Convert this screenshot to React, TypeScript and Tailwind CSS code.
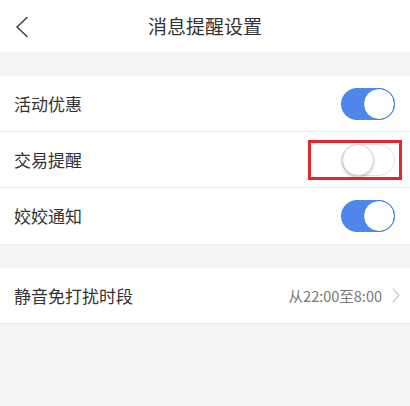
const font = "font-['Noto_Sans_CJK_SC','Noto_Sans',sans-serif]";

function Toggle({ on }: { on: boolean }) {
  return (
    <div
      className={
        on
          ? 'relative h-[32px] w-[54px] rounded-full bg-[#4f86ec]'
          : 'relative h-[32px] w-[54px] rounded-full border border-[#e3e3e3] bg-white'
      }
    >
      <div
        className={
          on
            ? 'absolute right-0 top-0 h-[32px] w-[32px] rounded-full border border-[#3f74d6] bg-white'
            : 'absolute left-0 top-[-1px] h-[32px] w-[32px] rounded-full border border-[#d4d4d4] bg-white shadow-[0_2px_3px_rgba(0,0,0,0.18)]'
        }
      />
    </div>
  );
}

function Row({ label, children, last }: { label: string; children: React.ReactNode; last?: boolean }) {
  return (
    <div className={last ? 'flex h-[56px] items-center justify-between bg-white pl-[14px] pr-[15px]' : 'flex h-[56px] items-center justify-between border-b border-[#ececec] bg-white pl-[14px] pr-[15px]'}>
      <span className="text-[17px] text-[#333]">{label}</span>
      {children}
    </div>
  );
}

export default function App() {
  return (
    <div className={`h-[406px] w-[410px] bg-[#f4f5f7] ${font}`}>
      <div className="relative flex h-[52px] items-center justify-center bg-white">
        <svg className="absolute left-[15px] top-[16px]" width="14" height="22" viewBox="0 0 14 22" fill="none">
          <path d="M12 1.5 L2 11 L12 20.5" stroke="#444" strokeWidth="1.6" strokeLinecap="round" strokeLinejoin="round" />
        </svg>
        <span className="text-[19px] text-[#333]">消息提醒设置</span>
      </div>
      <div className="h-[24px]" />
      <Row label="活动优惠">
        <Toggle on />
      </Row>
      <Row label="交易提醒">
        <div className="relative">
          <Toggle on={false} />
          <div className="absolute left-[-33px] top-[-4px] h-[40px] w-[94px] border-[3px] border-[#e3262d]" />
        </div>
      </Row>
      <Row label="姣姣通知" last>
        <Toggle on />
      </Row>
      <div className="h-[24px] border-t border-[#ececec]" />
      <div className="flex h-[56px] items-center justify-between border-b border-[#ececec] bg-white pl-[14px] pr-[10px]">
        <span className="text-[17px] text-[#333]">静音免打扰时段</span>
        <div className="flex items-center gap-[10px]">
          <span className="text-[14.5px] text-[#777]">从22:00至8:00</span>
          <svg width="8" height="15" viewBox="0 0 8 15" fill="none">
            <path d="M1 1 L7 7.5 L1 14" stroke="#ccc" strokeWidth="1.2" strokeLinecap="round" strokeLinejoin="round" />
          </svg>
        </div>
      </div>
    </div>
  );
}
